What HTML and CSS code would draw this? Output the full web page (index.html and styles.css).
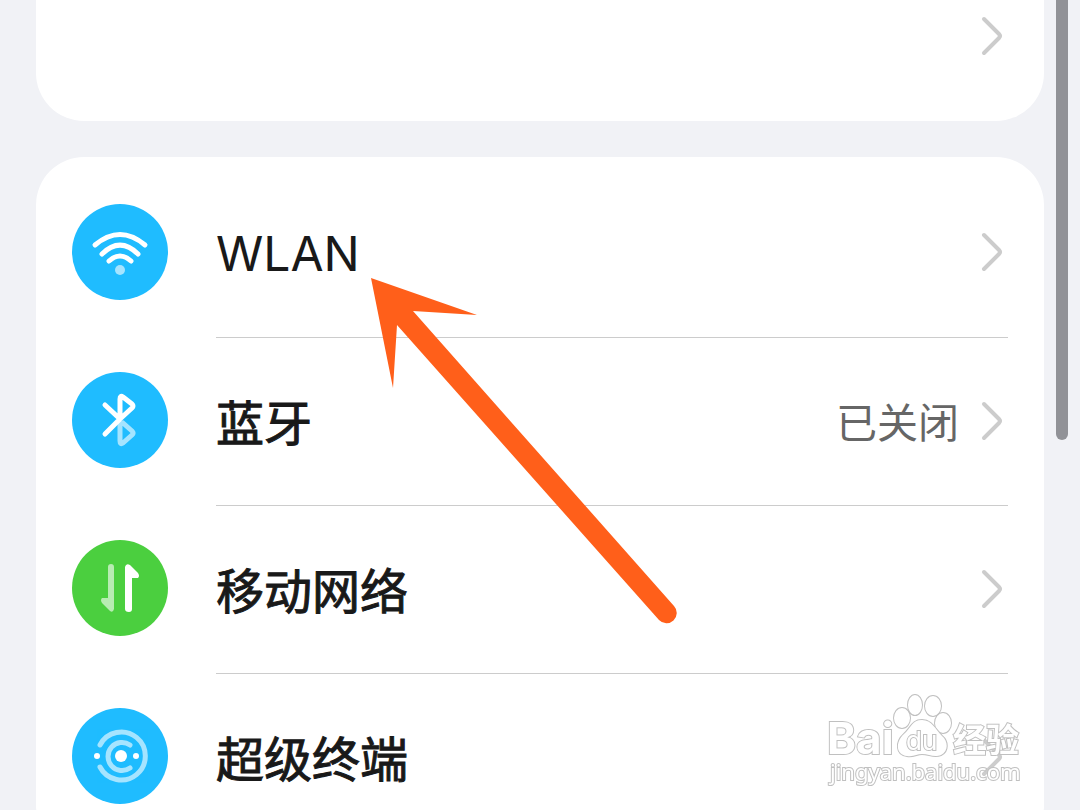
FILE: index.html
```
<!DOCTYPE html>
<html lang="zh-CN">
<head>
    <meta charset="UTF-8">
    <meta name="viewport" content="width=device-width, initial-scale=1.0">
    <title>设置</title>
    <link rel="stylesheet" href="styles.css">
</head>
<body>
    <main class="settings">
        <section class="card account-card">
            <a class="account" href="#account" aria-label="帐号">
                <svg class="chevron" viewBox="0 0 24 42"><path d="M4 4 L19 19 Q21 21 19 23 L4 38"/></svg>
            </a>
        </section>

        <nav class="card network-card">
            <a class="row" href="#wlan">
                <svg class="icon blue" viewBox="0 0 96 96">
                    <g class="line">
                        <path d="M23 41 Q48 20 73 41"/>
                        <path d="M30 50 Q48 32 66 50"/>
                        <path d="M37 57 Q48 47 59 57"/>
                    </g>
                    <circle class="dot faded" cx="48" cy="66" r="5"/>
                </svg>
                <span class="row-body">
                    <span class="label latin">WLAN</span>
                    <svg class="chevron" viewBox="0 0 24 42"><path d="M4 4 L19 19 Q21 21 19 23 L4 38"/></svg>
                </span>
            </a>

            <a class="row" href="#bluetooth">
                <svg class="icon blue" viewBox="0 0 96 96">
                    <path class="line faded" d="M48 51 V69 Q48 73 51 71 L60 63 Q62 61 60 59 L51 51"/>
                    <path class="line" d="M33 33 L48 47 L60 36 Q62 34 60 32 L51 25 Q48 23 48 27 V47 L33 62"/>
                </svg>
                <span class="row-body">
                    <span class="label">蓝牙</span>
                    <span class="value">已关闭</span>
                    <svg class="chevron" viewBox="0 0 24 42"><path d="M4 4 L19 19 Q21 21 19 23 L4 38"/></svg>
                </span>
            </a>

            <a class="row" href="#mobile">
                <svg class="icon green" viewBox="0 0 96 96">
                    <path class="dot faded" d="M36 27 Q36 24 39 24 Q42 24 42 27 V69 Q41 73 38 71 L30 63 Q28 60 30 58 H36 Z"/>
                    <path class="dot" d="M60 69 Q60 72 57 72 Q53 72 53 69 V27 Q54 23 58 25 L66 33 Q68 36 66 38 H60 Z"/>
                </svg>
                <span class="row-body">
                    <span class="label">移动网络</span>
                    <svg class="chevron" viewBox="0 0 24 42"><path d="M4 4 L19 19 Q21 21 19 23 L4 38"/></svg>
                </span>
            </a>

            <a class="row" href="#super-device">
                <svg class="icon blue" viewBox="0 0 96 96">
                    <g class="line faded">
                        <path d="M28 37 A24 24 0 1 1 28 59"/>
                        <path d="M58 37 A14 14 0 1 0 58 60"/>
                    </g>
                    <circle class="dot" cx="49" cy="48" r="6"/>
                    <circle class="dot" cx="25" cy="48" r="3"/>
                    <circle class="dot" cx="64" cy="48" r="3"/>
                </svg>
                <span class="row-body">
                    <span class="label">超级终端</span>
                    <svg class="chevron" viewBox="0 0 24 42"><path d="M4 4 L19 19 Q21 21 19 23 L4 38"/></svg>
                </span>
            </a>
        </nav>
    </main>

    <div class="scroll-thumb"></div>

    <!-- pointer arrow -->
    <svg class="pointer" viewBox="0 0 308 348">
        <path d="M1 0 L107 37 L43 33 L304 328 A10 10 0 0 1 289 342 L27 47 L23 110 Z"/>
    </svg>

    <!-- watermark -->
    <svg class="watermark" viewBox="0 0 204 104">
        <text class="brand" x="5" y="64">Bai</text>
        <g class="paw">
            <ellipse cx="80" cy="28" rx="8" ry="10"/>
            <ellipse cx="93" cy="15" rx="7" ry="10"/>
            <ellipse cx="111" cy="16" rx="8" ry="10"/>
            <ellipse cx="121" cy="33" rx="8" ry="10"/>
            <path d="M100 30 C90 30 89 38 82 44 C73 52 74 65 85 66 C92 67 95 64 100 64 C107 64 112 68 119 65 C127 61 126 51 120 46 C113 39 110 30 100 30 Z"/>
        </g>
        <text class="brand-du" x="84" y="60">du</text>
        <text class="brand-cn" x="131" y="62">经验</text>
        <text class="site" x="8" y="90">jingyan.baidu.com</text>
    </svg>
</body>
</html>
```
FILE: styles.css
```
* {
    box-sizing: border-box;
}

body {
    margin: 0;
    height: 100vh;
    overflow: hidden;
    background-color: #f1f2f6;
    font-family: "Noto Sans", "Noto Sans CJK SC", sans-serif;
    color: #191919;
}

.settings {
    display: flex;
    flex-direction: column;
    gap: 36px;
    padding: 0 36px;
}

.card {
    background-color: #ffffff;
    border-radius: 48px;
}

.account-card {
    border-top-left-radius: 0;
    border-top-right-radius: 0;
}

.account {
    display: flex;
    justify-content: flex-end;
    padding: 15px 40px 64px;
}

.network-card {
    padding: 12px 36px;
}

.row {
    display: flex;
    gap: 48px;
    color: inherit;
    text-decoration: none;
}

.row-body {
    flex: 1;
    display: flex;
    align-items: center;
    padding: 0 4px 2px 0;
}

.row + .row .row-body {
    border-top: 1px solid #cccccc;
}

.label {
    flex: 1;
    font-size: 48px;
    line-height: 64px;
    padding-top: 4px;
    -webkit-text-stroke: 1px #191919;
}

.latin {
    font-family: Inter, sans-serif;
    -webkit-text-stroke: 0;
}

.value {
    font-size: 41px;
    line-height: 56px;
    padding-top: 2px;
    margin-right: 21px;
    color: #666666;
}

.icon {
    width: 96px;
    height: 96px;
    margin: 35px 0 37px;
    border-radius: 50%;
}

.blue {
    background-color: #1fbcff;
}

.green {
    background-color: #4bcf3f;
}

.line {
    fill: none;
    stroke: #ffffff;
    stroke-width: 5px;
    stroke-linecap: round;
    stroke-linejoin: round;
}

.dot {
    fill: #ffffff;
}

.faded {
    opacity: 0.6;
}

.chevron {
    display: block;
    width: 24px;
    height: 42px;
    fill: none;
    stroke: #cccccc;
    stroke-width: 4px;
    stroke-linecap: round;
}

.scroll-thumb {
    position: fixed;
    top: -12px;
    right: 12px;
    width: 12px;
    height: 452px;
    border-radius: 6px;
    background-color: #919297;
}

.pointer {
    position: absolute;
    top: 278px;
    left: 370px;
    width: 308px;
    height: 348px;
    fill: #ff5f1a;
    pointer-events: none;
}

.watermark {
    position: fixed;
    right: 54px;
    bottom: 16px;
    width: 204px;
    height: 104px;
    fill: #ffffff;
    stroke: #c0c0c0;
    stroke-width: 2px;
    paint-order: stroke;
    pointer-events: none;
}

.brand {
    font: bold 44px Inter, sans-serif;
}

.brand-du {
    font: 26px Inter, sans-serif;
}

.brand-cn {
    font: bold 33px "Noto Sans CJK SC", sans-serif;
}

.site {
    font: 22px "Noto Sans", sans-serif;
}
```
